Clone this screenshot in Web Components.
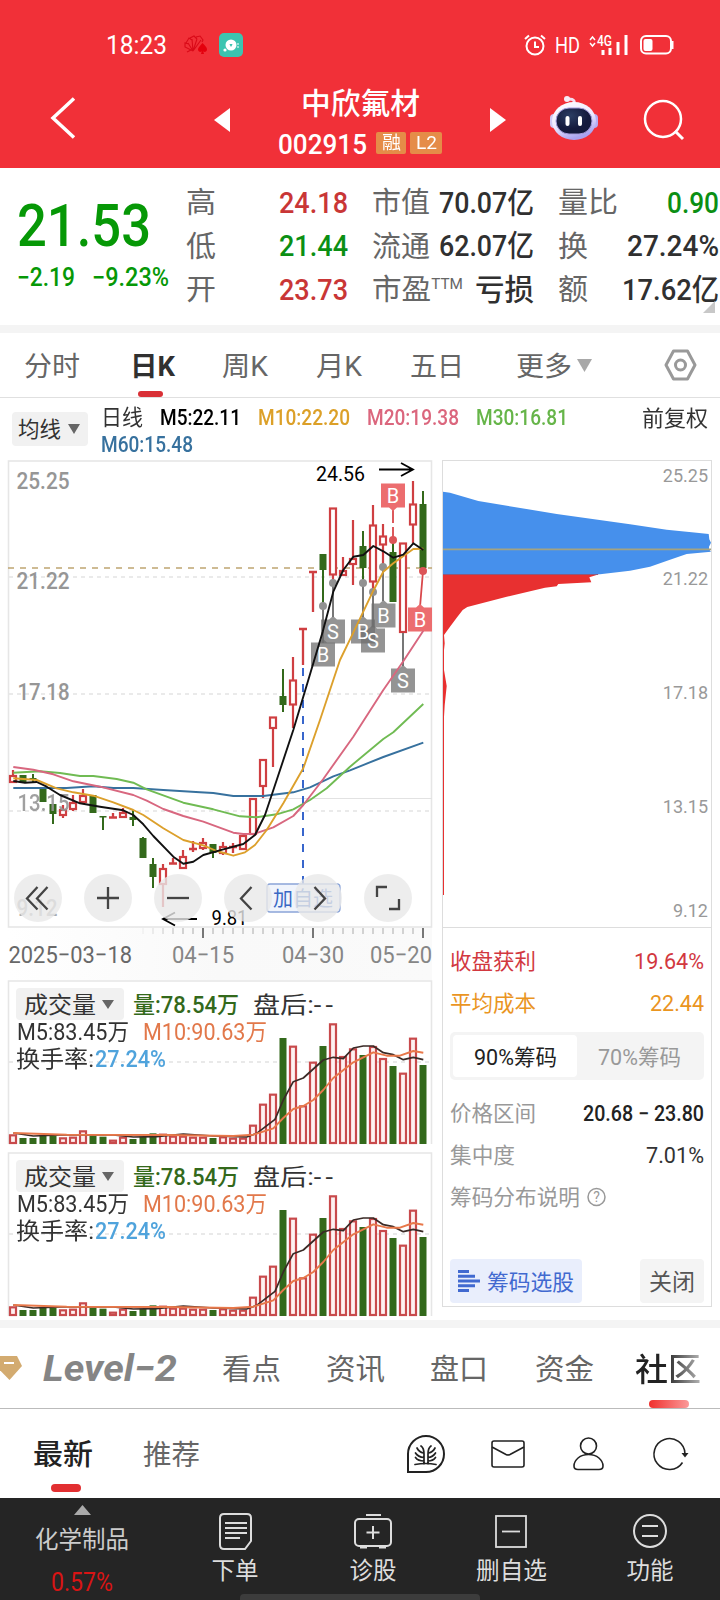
<!DOCTYPE html>
<html lang="zh-CN">
<head>
<meta charset="utf-8">
<meta name="viewport" content="width=720">
<title>中欣氟材 002915</title>
<style>
html,body{margin:0;background:#fff}
body{width:720px;height:1600px;overflow:hidden;font-family:Roboto,"Noto Sans CJK SC",sans-serif}
</style>
</head>
<body>
<stock-page></stock-page>
<script>
const sheet = `*{box-sizing:border-box} svg{display:block;flex:none;overflow:visible} .row{display:flex;align-items:center}`;
function define(name, html, setup) {
  const tpl = document.createElement('template');
  tpl.innerHTML = `<style>${sheet}</style>` + html;
  customElements.define(name, class extends HTMLElement {
    connectedCallback() {
      if (this.shadowRoot) return;
      const root = this.attachShadow({mode: 'open'});
      root.append(tpl.content.cloneNode(true));
      if (setup) setup.call(this, root);
    }
  });
}
/* A label whose run of text is condensed or widened to the width in "w"; --dy nudges its baseline. */
define('fit-text', `<style>:host{display:block;flex:none;white-space:nowrap;line-height:1.2}
span{display:inline-block;transform-origin:0 50%}</style><span><slot></slot></span>`, function (root) {
  const w = +this.getAttribute('w'), s = root.querySelector('span');
  const natural = s.getBoundingClientRect().width;
  this.style.width = w + 'px';
  if (natural) s.style.transform = `translateY(var(--dy, 0px)) scaleX(${w / natural})`;
});

/* ---------- header ---------- */
define('status-bar', `<style>:host{display:flex;align-items:center;height:90px;padding-left:106px;color:#fff;font-size:25px;--dy:1px}
.hd{font-size:22px}.r{flex:1}</style>
<fit-text w="61">18:23</fit-text>
<svg style="margin-left:17px" width="24" height="20" viewBox="0 0 24 20" fill="none" stroke="#d90a18" stroke-width="1.100"><path d="M9 16L1 12V8l4 1M2 8l3-5 3 2M6 3l4-2 3 3M12 2l4-1 3 4-1 2M9 16L4 8M9 16L8 4M9 16l4-12M9 16l8-11M3 17l4-2"/><path fill="#e4000d" stroke="none" d="M18.500 8c3 3 4.500 4.500 4.500 6.500 0 3-4 3-4 1l1 3.500h-3l1-3.500c0 2-4 2-4-1 0-2 2-3.500 4.500-6.500Z"/></svg>
<svg style="margin-left:11px" width="24" height="24"><rect width="24" height="24" rx="5" fill="#3cc4b0"/><circle cx="12" cy="12" r="5.500" fill="#fff"/><path d="M10.500 11h3l-1 2.500h-1Z" fill="#3cc4b0"/><circle cx="6" cy="17" r="1.600" fill="#fff"/><path d="M19 10v5" stroke="#fff" stroke-dasharray="2 1"/></svg>
<span class="r"></span>
<svg width="22" height="22" viewBox="0 0 22 22" fill="none" stroke="#fff" stroke-width="2"><circle cx="11" cy="12" r="8.500"/><path d="M11 7.500V13h4M1 5l4-3.500M21 5l-4-3.500"/></svg>
<fit-text class="hd" w="25" style="margin-left:9px">HD</fit-text>
<svg style="margin-left:9px" width="40" height="22" viewBox="0 0 40 22"><path d="M1 6l2.500-3L6 6M1 9l2.500 3L6 9" fill="none" stroke="#fff" stroke-width="1.500"/><text x="8" y="12" fill="#fff" font-size="15" font-family="Roboto" font-weight="500" textLength="15" lengthAdjust="spacingAndGlyphs">4G</text><path d="M14 16v5M21 14v7M29 8v13M37 1v20" stroke="#fff" stroke-width="3"/></svg>
<svg style="margin:0 46px 0 11px" width="34" height="20"><rect x="1" y="1" width="30" height="17.500" rx="5" fill="none" stroke="#fff" stroke-width="2"/><path d="M32.500 6v8" stroke="#fff" stroke-width="2"/><rect x="3.500" y="4" width="9" height="12" rx="2" fill="#fff"/></svg>`);

define('stock-nav', `<style>:host{display:flex;height:78px;color:#fff;align-items:flex-start}
.mid{display:flex;flex-direction:column;align-items:center;width:260px}
.t{font-size:30px;font-weight:500;line-height:34px;margin-top:-5px;--dy:1.500px}.row{font-size:28px;font-weight:500;height:26px;margin-top:11px;width:164px;--dy:1.500px}
.tag{font-size:18px;font-weight:400;background:#e58c48;border-radius:2px;height:22px;line-height:22px;display:flex;justify-content:center;margin-left:4px;--dy:0px}
.tag fit-text{line-height:22px}</style>
<svg style="margin:7px 0 0 50px" width="27" height="42"><path d="M24 1.500L3 21l21 19.500" fill="none" stroke="#fff" stroke-width="3.500"/></svg>
<svg style="margin:18px 0 0 137px" width="16" height="24"><path d="M16 0v24L0 12Z" fill="#fff"/></svg>
<div class="mid"><fit-text class="t" w="119">中欣氟材</fit-text>
<div class="row"><fit-text w="89">002915</fit-text><span class="tag" style="width:30px;margin-left:9px"><fit-text w="19">融</fit-text></span><span class="tag" style="width:32px"><fit-text w="21">L2</fit-text></span></div></div>
<svg style="margin:18px 0 0 0" width="16" height="24"><path d="M0 0v24l16-12Z" fill="#fff"/></svg>
<svg style="margin:5px 0 0 44px" width="48" height="46" viewBox="0 0 48 46"><defs><linearGradient id="g" x1="0" y1="0" x2=".4" y2="1"><stop offset="0" stop-color="#fff"/><stop offset=".6" stop-color="#ece9ff"/><stop offset="1" stop-color="#a9a2f0"/></linearGradient><radialGradient id="d" cx=".4" cy=".3"><stop offset="0" stop-color="#2b3d63"/><stop offset="1" stop-color="#141a3d"/></radialGradient></defs>
<path d="M23 9c2-2 2-5-5-5" fill="none" stroke="#f3dff0" stroke-width="3"/><circle cx="17" cy="4" r="3" fill="#f7ecf6"/><rect x="0" y="19" width="8" height="14" rx="4" fill="#cfc8f6"/><rect x="40" y="19" width="8" height="14" rx="4" fill="#b5adf3"/><ellipse cx="24" cy="26" rx="22" ry="19" fill="url(#g)"/><rect x="6" y="13" width="36" height="26" rx="13" fill="url(#d)" stroke="#a49ddb"/><rect x="15.500" y="21" width="4" height="10" rx="2" fill="#fff"/><rect x="28" y="21" width="4" height="10" rx="2" fill="#fff"/></svg>
<svg style="margin:10px 0 0 46px" width="42" height="42"><circle cx="19" cy="19" r="18" fill="none" stroke="#fff" stroke-width="2.500"/><path d="M31 31l8 8" stroke="#fff" stroke-width="3"/></svg>`);

/* ---------- quote ---------- */
define('quote-board', `<style>:host{display:flex;height:165px;border-bottom:8px solid #f4f4f4;color:#303030;overflow:hidden;position:relative;--dy:1.500px}
.price{width:186px;padding:18px 0 0 17px;color:#069806}.big{font-size:60px;font-weight:500;line-height:76px}.ch{font-size:25px;line-height:30px;margin-top:-1px;font-weight:500}
.g{display:grid;grid-template-rows:43px 44px 43px;align-items:center;font-size:29px;padding-top:12px;height:142px}
.l{color:#666;font-size:29px}.v{font-weight:500;font-size:29.500px}.r{color:#c93636}.gr{color:#0b8f14}
.g>*{justify-self:start}.g>.v{justify-self:end}sup{font-size:15px;vertical-align:11px;line-height:0}
.c{position:absolute;right:5px;top:133px}</style>
<div class="price"><fit-text class="big" w="134">21.53</fit-text><div class="row ch"><fit-text w="58">−2.19</fit-text><fit-text w="77" style="margin-left:17px">−9.23%</fit-text></div></div>
<div class="g" style="width:162px;grid-template-columns:40px 122px"><fit-text class="l" w="30">高</fit-text><fit-text class="v r" w="69">24.18</fit-text><fit-text class="l" w="30">低</fit-text><fit-text class="v gr" w="69">21.44</fit-text><fit-text class="l" w="30">开</fit-text><fit-text class="v r" w="69">23.73</fit-text></div>
<div class="g" style="width:162px;margin-left:24px;grid-template-columns:58px 104px"><fit-text class="l" w="58">市值</fit-text><fit-text class="v" w="95">70.07亿</fit-text><fit-text class="l" w="58">流通</fit-text><fit-text class="v" w="95">62.07亿</fit-text><fit-text class="l" w="91">市盈<sup>TTM</sup></fit-text><fit-text class="v" w="59">亏损</fit-text></div>
<div class="g" style="width:161px;margin-left:24px;grid-template-columns:auto 1fr"><fit-text class="l" w="60">量比</fit-text><fit-text class="v gr" w="52">0.90</fit-text><fit-text class="l" w="30">换</fit-text><fit-text class="v" w="92">27.24%</fit-text><fit-text class="l" w="30">额</fit-text><fit-text class="v" w="97">17.62亿</fit-text></div>
<svg class="c" width="12" height="12"><path d="M12 0v12H0Z" fill="#c8c8c8"/></svg>`);

define('period-tabs', `<style>:host{display:flex;align-items:center;height:65px;border-bottom:1px solid #e0e0e0;padding-left:24px;font-size:27px;color:#666;--dy:1.500px}
.on{color:#303030;font-weight:700;position:relative}.on i{position:absolute;left:8px;bottom:-16px;width:25px;height:6px;border-radius:3px;background:#d93036}</style>
<fit-text w="56">分时</fit-text><div class="on" style="margin-left:50px"><fit-text w="45">日K</fit-text><i></i></div><fit-text w="46" style="margin-left:47px">周K</fit-text><fit-text w="46" style="margin-left:48px">月K</fit-text><fit-text w="54" style="margin-left:48px">五日</fit-text><fit-text w="56" style="margin-left:52px">更多</fit-text>
<svg style="margin-left:5px" width="15" height="13"><path d="M0 0h15L7.500 13Z" fill="#a8a8a8"/></svg>
<svg style="margin-left:72px" width="33" height="32" fill="none" stroke="#999" stroke-width="3"><path d="M9.500 2h14L31 16l-7.500 14h-14L2 16Z" stroke-linejoin="round"/><circle cx="16.500" cy="16" r="5"/></svg>`);

define('ma-legend', `<style>:host{display:flex;height:62px;align-items:flex-start;font-size:22px;padding-left:12px;color:#333}
.b{display:flex;align-items:center;width:76px;height:34px;margin-top:14px;border-radius:4px;background:#f1f1f1;padding-left:6px;--dy:1px}
.ls{display:flex;flex-wrap:wrap;width:500px;margin:7px 0 0 13px;align-content:flex-start;line-height:26px;font-weight:500}.ls fit-text{margin-right:17px;line-height:26.500px;font-size:21.500px}</style>
<div class="b"><fit-text w="43">均线</fit-text><svg style="margin-left:7px" width="12" height="10"><path d="M0 0h12L6 10Z" fill="#666"/></svg></div>
<div class="ls"><fit-text w="42" style="font-weight:400">日线</fit-text><fit-text w="81" style="color:#000">M5:22.11</fit-text><fit-text w="92" style="color:#dca028">M10:22.20</fit-text><fit-text w="92" style="color:#db667d">M20:19.38</fit-text><fit-text w="92" style="color:#66b549">M30:16.81</fit-text><fit-text w="92" style="color:#37719e">M60:15.48</fit-text></div>
<fit-text w="66" style="margin:8px 0 0 41px">前复权</fit-text>`);

/* ---------- charts ---------- */
const X = i => 13 + 10 * i;
const line = (pts, color, w = 1.9) => `<polyline fill="none" stroke="${color}" stroke-width="${w}" stroke-linejoin="round" points="${pts}"/>`;
const scaled = (a, oy) => { const o = []; for (let i = 0; i < a.length; i += 2) o.push((a[i] / 3).toFixed(1) + ',' + (oy + a[i + 1] / 3).toFixed(1)); return o.join(' '); };
const fitted = (x, y, w, size, color, t, extra = '') => `<text x="${x}" y="${y}" font-size="${size}" fill="${color}" textLength="${w}" lengthAdjust="spacingAndGlyphs" ${extra}>${t}</text>`;
/* [up?, body top, body bottom, wick top, wick bottom] */
const candles = [[1,776,782,770,782],[0,775,782,775,782],[0,778,780,774,783],[0,788,802,788,802],[0,804,814,804,824],[1,810,815,805,818],[1,803,809,795,811],[1,796,802,789,803],[0,795,813,795,813],[0,816,817.5,816,830],[1,817,818,813,818],[1,813,817,808,818],[0,817,820,810,826],[0,838,858,837,858],[0,864,877,858,888],[1,869,884,864,907],[1,863,864,858,864],[1,857,868,850,869],[1,848,850,841,852],[1,843,848,838,850],[0,844,853,844,858],[1,847,853,842,855],[1,846.5,847.5,843,853],[1,836,849,835,850],[1,799,834,798,835],[1,760,786,760,798],[1,717.500,728,717,767],[0,696,705,669,712],[1,680.500,704.500,657,728],[1,628.500,629.500,629,665],[1,571.500,572.500,572,612],[0,554,570,554,606],[1,508.500,574.500,508,583],[1,571,575,557,576],[1,559,564,520,585],[0,546,568,531,583],[1,525.500,581.500,505,592],[1,536.500,544.500,524,567],[0,552,602,540,602],[1,543.500,632,543,633],[1,504.500,524.500,481,543],[0,504,568,491,571]];
function candle([up, a, b, t, u], i) {
  const x = X(i);
  if (!up) return `<path d="M${x} ${t}V${u}" stroke="#33691b" stroke-width="2"/><rect x="${x - 3.500}" y="${a}" width="7" height="${b - a}" fill="#33691b"/>`;
  if (b - a < 2.1) return `<path d="M${x} ${t}V${u}M${x - 4} ${(a + b) / 2}h8" stroke="#cf3f42" stroke-width="2.300"/>`;
  return `<path d="M${x} ${t}V${a}M${x} ${b}V${u}" stroke="#cf3f42" stroke-width="2.200"/><rect x="${x - 3}" y="${a}" width="6" height="${b - a}" fill="#fff" stroke="#cf3f42" stroke-width="2.200"/>`;
}
/* [letter, box centre x, box centre y, hot?] */
const marks = [['B',323,654.5],['S',333,631.500],['B',363,631.500],['S',373,640.500],['B',383.500,615.500],['S',403,680.500],['B',393,495.500,1],['B',420,619.500,1]];
const stems = `<g stroke="#777" stroke-width="2"><path d="M323 606V643M333 583V617M363 583V617M373 592V627M383 567V601M403 633V666"/></g><g fill="#929292"><circle cx="323" cy="606" r="4"/><circle cx="333" cy="583" r="4"/><circle cx="363" cy="583" r="4"/><circle cx="373" cy="592" r="4"/><circle cx="383" cy="567" r="4"/></g><path d="M393 510v13m0 4v13M423 571l-3 36" stroke="#d9484b" stroke-width="1.800" fill="none"/><g fill="#dc5558"><circle cx="393" cy="540" r="4"/><circle cx="423" cy="571" r="4"/></g>`;
const mark = ([c, x, y, hot]) => { const top = hot && y < 500, e = top ? y + 12 : y - 12, k = top ? 3.5 : -3.5;
  return `<path d="M${x - 12} ${y - 12}${top ? 'h24v24h-8l-4 3.500-4-3.500h-8Z' : 'h8l4-3.500 4 3.500h8v24h-24Z'}" stroke-linejoin="round" fill="${hot ? '#ec6d6f' : '#6f6f6f'}" fill-opacity="${hot ? 1 : .74}"/>`; };
const letter = ([c, x, y]) => `<text x="${x}" y="${y + 7}" text-anchor="middle" font-size="20" fill="#fff">${c}</text>`;

define('chart-button', `<style>:host{display:block;width:48px;height:48px;border-radius:50%;background:rgba(232,232,232,.8)}</style><svg width="48" height="48" fill="none" stroke="#444" stroke-width="2.300"><path/></svg>`, function (root) {
  root.querySelector('path').setAttribute('d', {
    first: 'M23.500 13L13 24.500l10.500 11M33.500 13L23 24.500l10.500 11', plus: 'M13 24h22M24 13v22', minus: 'M13 24h22', prev: 'M27.500 13L17 24.500l10.500 11', next: 'M20.500 13L31 24.500l-10.500 11', full: 'M13 23V13h10M25 35h10V25'
  }[this.getAttribute('icon')]);
});

define('k-chart', `<style>:host{display:grid;width:440px;height:520px}:host>*{grid-area:1/1}
.tools{display:flex;gap:22px;padding:414px 0 0 14px;height:470px;z-index:1}</style><div class="chart"></div>
<div class="tools"><chart-button icon="first"></chart-button><chart-button icon="plus"></chart-button><chart-button icon="minus"></chart-button><chart-button icon="prev"></chart-button><chart-button icon="next"></chart-button><chart-button icon="full"></chart-button></div>`, function (root) {
  const m5 = [40,993,75,998,110,996,140,1010,180,1035,240,1060,300,1070,370,1081,400,1095,430,1123,460,1158,520,1220,550,1241,580,1235,610,1215,670,1198,730,1182,765,1155,795,1095,830,990,880,840,925,690,968,545,1000,425,1030,360,1060,320,1090,315,1120,288,1150,304,1180,323,1210,314,1240,280,1270,300];
  const m10 = [40,985,110,990,170,1015,220,1027,280,1037,340,1057,400,1080,430,1095,490,1135,550,1170,610,1186,650,1203,700,1217,735,1207,765,1185,800,1140,850,1060,910,955,960,810,1000,690,1020,630,1060,548,1120,422,1150,365,1180,340,1240,297,1270,296];
  const m20 = [40,951,100,959,160,973,220,994,300,1010,400,1035,440,1052,490,1077,550,1098,610,1115,700,1148,730,1152,765,1151,820,1132,880,1098,910,1065,970,987,1060,860,1150,720,1210,634,1270,542];
  const m30 = [40,968,120,964,180,969,240,978,280,978,350,987,400,998,440,1018,550,1058,640,1078,720,1099,770,1102,830,1093,880,1078,930,1050,980,1015,1050,950,1150,867,1180,847,1270,762];
  const m60 = [40,1014,200,1014,280,1009,340,1014,400,1014,490,1020,600,1027,640,1029,700,1038,790,1038,880,1027,930,1012,1000,979,1050,961,1150,921,1270,878];
  let ticks = '';
  for (let i = 13; i < 42; i++) { const big = i === 19 || i === 30 || i === 41; ticks += `<path d="M${X(i)} 928v${big ? 10 : 6}" stroke="${big ? '#777' : '#aaa'}" stroke-width="${big ? 2 : 1}" opacity="${Math.min(1, (i - 12) / 5)}"/>`; }
  const ax = 'font-weight="500"';
  root.querySelector('.chart').innerHTML = `<svg width="440" height="520" viewBox="0 460 440 520" font-family='Roboto,"Noto Sans CJK SC",sans-serif'>
  <defs><linearGradient id="f"><stop offset="0" stop-color="#fff"/><stop offset=".5" stop-color="#f9f9f9"/><stop offset="1" stop-color="#fafafa"/></linearGradient></defs>
  <rect x="8" y="927" width="424" height="53" fill="url(#f)"/>
  <rect x="8.500" y="461" width="423" height="466" fill="#fff" stroke="#e6e6e6" stroke-width="1.600"/>
  <path d="M9 577H431M9 694H431M9 811H431" stroke="#e4e4e4" stroke-width="1.500" stroke-dasharray="4 4"/><path d="M260 798.500H432" stroke="#e2e2e2"/>
  <path d="M8 568H432" stroke="#bfa572" stroke-width="1.600" stroke-dasharray="6 6"/>
  ${candles.map(candle).join('')}
  ${fitted(16.500,489,53,23,'#969696','25.25',ax)}${fitted(16.500,589,53,23,'#969696','21.22',ax)}${fitted(17.500,700,52,23,'#969696','17.18',ax)}${fitted(17.500,811,52,23,'#969696','13.15',ax + ' opacity=".9"')}${fitted(16.500,916,41,23,'#aaa','9.12',ax)}
  <path d="M303 668V884" stroke="#3866cc" stroke-width="2" stroke-dasharray="8 8"/>
  ${stems}${marks.map(mark).join('')}${marks.map(letter).join('')}
  ${line(scaled(m60,450),'#37719e')}${line(scaled(m30,450),'#70bb53')}${line(scaled(m20,450),'#d8677f')}${line(scaled(m10,450),'#dca02c')}${line(scaled(m5,450),'#111')}
  ${fitted(316,481,49,20,'#000','24.56')}<path d="M379 469.500h33M401 463l12 6.500-12 6.500" fill="none" stroke="#000" stroke-width="1.800"/>
  ${fitted(211.500,925,36,20,'#000','9.81')}<path d="M197 919h-33M175 912.500l-12 6.500 12 6.500" fill="none" stroke="#000" stroke-width="1.800"/>
  <rect x="267" y="884" width="73" height="28" rx="3" fill="#f0f4fc" stroke="#8aa4d8" stroke-width="1.300"/>${fitted(273,906,60,20,'#3a68c4','加自选')}
  ${ticks}
  ${fitted(8.500,963,123.500,24,'#686868','2025−03−18')}${fitted(172,963,62,24,'#868686','04−15')}${fitted(282,963,62,24,'#868686','04−30')}${fitted(370,963,62,24,'#868686','05−20')}
  </svg>`;
});

const vols = '493r504g504g497g497g502r500r481r498g500g509r500r507g500g490g491r497r497r500r500r504g499r503r503r464r401r371r204g227r406r275r228g160r258r235r255g228r264r288g308r203r285g'.match(/\d+./g);
define('volume-chart', `<style>:host{display:grid;width:440px;height:172px}:host>*{grid-area:1/1}
.t{padding:8px 0 0 16px;z-index:1;font-size:23px;color:#333}.row{height:27px}.b{background:#f1f1f1;border-radius:4px;width:108px;height:32px;padding-left:8px}.d{letter-spacing:3.500px}</style><div class="c"></div>
<div class="t"><div class="row" style="height:32px;--dy:1.500px"><div class="row b"><fit-text w="72">成交量</fit-text><svg style="margin-left:6px" width="12" height="9"><path d="M0 0h12L6 9Z" fill="#666"/></svg></div><fit-text w="106" style="margin-left:9px;color:#33691b;font-weight:500">量:78.54万</fit-text><fit-text w="84" style="margin-left:14px">盘后:<span class="d">--</span></fit-text></div>
<div class="row" style="height:25px"><fit-text w="112" style="margin-left:1px">M5:83.45万</fit-text><fit-text w="124" style="margin-left:14px;color:#e2784a">M10:90.63万</fit-text></div>
<div class="row" style="height:29px"><fit-text w="78">换手率:</fit-text><fit-text w="71" style="margin-left:1px;color:#4fa3dc;font-weight:500">27.24%</fit-text></div></div>`, function (root) {
  const a = [40,489,100,498,180,495,340,495,400,501,470,500,550,492,640,498,740,501,770,490,825,448,850,390,880,335,910,324,970,270,1000,262,1030,266,1060,234,1090,228,1120,228,1150,248,1180,254,1210,269,1240,262,1270,269];
  const b = [40,489,200,494,500,495,700,498,760,494,820,475,850,444,880,417,910,408,940,390,970,360,1000,324,1060,277,1120,247,1160,257,1200,257,1240,243,1270,248];
  const bars = vols.map((v, i) => { const y = 970 + parseInt(v) / 3, x = X(i); return v.endsWith('g') ? `<rect x="${x - 3.500}" y="${y}" width="7" height="${1144 - y}" fill="#33691b"/>` : `<rect x="${x - 3}" y="${y + 1}" width="6" height="${1142 - y}" fill="#fdf1f1" stroke="#c84a4c" stroke-width="2.200"/>`; }).join('');
  root.querySelector('.c').innerHTML = `<svg width="440" height="172" viewBox="0 980 440 172"><path d="M8.500 1144V981H431.500V1144" fill="none" stroke="#e6e6e6" stroke-width="1.600"/><path d="M9 1062H431" stroke="#e2e2e2" stroke-width="1.500" stroke-dasharray="4 4"/>${bars}${line(scaled(a,970),'#3a2a26',1.700)}${line(scaled(b,970),'#e8784a',1.900)}</svg>`;
});

define('chip-panel', `<style>:host{display:flex;flex-direction:column;width:270px;height:847px;margin-left:2px;border:1px solid #ddd;color:#999;font-size:21.500px;--dy:1px}
.info{border-top:1px solid #ddd;flex:1;padding:12px 7px 0 7px;display:flex;flex-direction:column}.row{justify-content:space-between;height:42px}
.seg{display:flex;height:48px;margin-top:8px;background:#f4f4f4;border-radius:5px;padding:3px;--dy:2px}.seg div{flex:1;display:flex;align-items:center;justify-content:center}.seg .on{background:#fff;border-radius:4px;color:#222}
.bt{display:flex;justify-content:space-between;margin-top:41px;--dy:1.500px}.bt div{height:44px;border-radius:4px;display:flex;align-items:center;justify-content:center}</style>
<svg class="p" width="268" height="466" viewBox="443 461 268 466" font-family="Roboto" font-size="18" fill="#999"></svg>
<div class="info"><div class="row" style="color:#d2383f"><fit-text w="86">收盘获利</fit-text><fit-text w="70">19.64%</fit-text></div><div class="row" style="color:#ea951f"><fit-text w="86">平均成本</fit-text><fit-text w="54">22.44</fit-text></div>
<div class="seg"><div class="on"><fit-text w="83">90%筹码</fit-text></div><div><fit-text w="83">70%筹码</fit-text></div></div>
<div class="row" style="margin-top:12px"><fit-text w="86">价格区间</fit-text><fit-text w="121" style="color:#222;font-weight:500">20.68 − 23.80</fit-text></div><div class="row"><fit-text w="65">集中度</fit-text><fit-text w="58" style="color:#333">7.01%</fit-text></div>
<div class="row" style="justify-content:flex-start"><fit-text w="130">筹码分布说明</fit-text><svg style="margin-left:7px" width="19" height="19"><circle cx="9.500" cy="9" r="8.500" fill="none" stroke="#999" stroke-width="1.500"/><text x="9.500" y="14" text-anchor="middle" font-size="14" fill="#999" font-family="Roboto">?</text></svg></div>
<div class="bt"><div style="width:132px;background:#e9eefc;color:#4169d0"><svg style="margin-right:7px" width="22" height="22" stroke="#4169d0" stroke-width="2.800"><path d="M0 1.500h11M0 6.250h17M0 11h22M0 15.750h17M0 20.500h11"/></svg><fit-text w="87">筹码选股</fit-text></div><div style="width:64px;background:#f4f4f4;color:#555;font-size:23px"><fit-text w="46">关闭</fit-text></div></div></div>`, function (root) {
  const s = a => { const o = []; for (let i = 0; i < a.length; i += 2) o.push((430 + a[i] / 3).toFixed(1) + ',' + (450 + a[i + 1] / 3).toFixed(1)); return o.join(' '); };
  root.querySelector('.p').innerHTML = `<polygon fill="#4690ec" points="${s([39,125,60,128,145,153,380,192,600,223,710,239,800,248,836,252,838,268,843,278,837,290,837,298,843,305,770,312,720,329,660,350,600,362,510,373,39,373])}"/><polygon fill="#e83030" points="${s([39,373,507,373,478,382,484,397,385,402,380,409,345,413,230,440,112,471,98,480,80,503,60,530,42,555,44,580,42,600,42,660,50,708,44,765,42,800,42,1335,39,1335])}"/><path d="M443 549.300H711" stroke="#a3a382" stroke-width="1.700"/><path d="M443 574.500H598" stroke="#8a5a80"/>` + [[482,'25.25'],[585,'21.22'],[699,'17.18'],[813,'13.15'],[917,'9.12']].map(([y, t]) => `<text x="708" y="${y}" text-anchor="end">${t}</text>`).join('');
});

/* ---------- lower bars ---------- */
define('section-tabs', `<style>:host{display:flex;align-items:center;height:89px;border-top:8px solid #f4f4f4;border-bottom:1px solid #bbb;font-size:29px;color:#666;--dy:2px}
.lv{font:italic 700 37px Roboto,sans-serif;line-height:40px;color:#858585;--dy:1px}.on{position:relative;font-size:32px;font-weight:500;margin-left:41px}
.on fit-text{-webkit-mask:linear-gradient(90deg,#000 45%,#0005);mask:linear-gradient(90deg,#000 45%,#0005);color:#222;padding-bottom:3px;margin-bottom:-3px}.on i{position:absolute;left:14px;bottom:-21px;width:40px;height:8px;border-radius:4px;background:linear-gradient(90deg,#f0302d,#fb9a9a)}</style>
<svg width="22" height="24"><path d="M-8 0H17l5 10L9.500 24-6 8Z" fill="#d3ab70"/><path d="M4 7h10" stroke="#fff" stroke-width="2"/></svg>
<fit-text class="lv" w="134" style="margin-left:21px">Level−2</fit-text><fit-text w="59" style="margin-left:45px">看点</fit-text><fit-text w="59" style="margin-left:45px">资讯</fit-text><fit-text w="58" style="margin-left:45px">盘口</fit-text><fit-text w="59" style="margin-left:47px">资金</fit-text><div class="on"><fit-text w="66">社区</fit-text><i></i></div>`);

define('feed-bar', `<style>:host{display:flex;align-items:center;height:89px;font-size:28px;color:#666;--dy:2px}.on{position:relative;color:#222;font-size:29px;font-weight:500;margin-left:33px}.on i{position:absolute;left:18px;bottom:-21px;width:30px;height:8px;border-radius:4px;background:#e22f31}</style>
<div class="on"><fit-text w="60">最新</fit-text><i></i></div><fit-text w="57" style="margin-left:50px">推荐</fit-text>
<svg style="margin-left:207px" width="38" height="38" fill="none" stroke="#222" stroke-width="2"><path d="M1 37V19A18 18 0 1 1 19 37Z"/><path stroke-width="1.700" stroke-linecap="round" d="M17 29V19Q17 13 14 11M21 29V19Q21 13 24 11M8 29.500Q19 27.500 29 29.500M16.500 18Q12 17 10 13M17 22.500Q11 22 8.500 18M17 26Q11 26 8.500 22.500M21.500 18Q26 17 28 13M21 22.500Q26 22 28.500 18M21 26Q26 26 28.500 22.500"/></svg>
<svg style="margin-left:46px" width="34" height="28" fill="none" stroke="#222" stroke-width="1.600"><rect x="1" y="1" width="32" height="26" rx="2"/><path d="M1 7l14 7.500q2 1 4 0L33 7"/></svg>
<svg style="margin-left:48px" width="31" height="34" fill="none" stroke="#222" stroke-width="1.600"><circle cx="15.500" cy="9" r="8"/><path d="M15.500 17.500C7 17.500 1 23 1 29q0 3.500 4 3.500h21q4 0 4-3.500c0-6-6-11.500-14.500-11.500Z"/></svg>
<svg style="margin-left:49px" width="36" height="34" fill="none" stroke="#222" stroke-width="1.600"><path d="M29.500 25.500A15.500 15.500 0 1 1 32 17"/><path d="M28.500 16h7L32 20.500Z" fill="#222" stroke="none"/></svg>`);

define('nav-item', `<style>:host{display:flex;flex-direction:column;align-items:center;color:#ddd;font-size:23.500px;width:80px}.i{display:flex;align-items:center;height:38px;margin-top:14px}</style><div class="i"><slot name="icon"></slot></div><slot></slot>`);
define('bottom-bar', `<style>:host{display:flex;position:relative;height:102px;background:#252525;color:#ccc;overflow:hidden;--dy:1px}
.s{display:flex;flex-direction:column;align-items:center;width:128px;padding:7px 0 0;margin-left:18px;font-size:23.500px;--dy:1.500px}.home{position:absolute;left:240px;bottom:0;width:240px;height:6px;border-radius:4px 4px 0 0;background:#3c3c3c}nav-item fit-text{margin-top:6px}</style>
<div class="s"><svg width="17" height="10"><path d="M0 10h17L8.500 0Z" fill="#aaa"/></svg><fit-text w="94" style="margin-top:9px">化学制品</fit-text><fit-text w="62" style="margin-top:14px;color:#d81414;font-size:25px">0.57%</fit-text></div>
<nav-item style="margin-left:49px"><svg slot="icon" width="33" height="37" fill="none" stroke="#ddd" stroke-width="2"><path d="M5 1h23q4 0 4 4v23l-6 8H5q-4 0-4-4V5q0-4 4-4Z"/><path d="M6 10h22M6 15h22M6 20h22M6 25h15"/></svg><fit-text w="47">下单</fit-text></nav-item>
<nav-item style="margin-left:58px"><svg slot="icon" width="38" height="36" fill="none" stroke="#ddd" stroke-width="2"><rect x="1" y="6" width="36" height="27" rx="4"/><path d="M12 2h15M19 13v13M12.500 19.500h13M6 34.500h7M25 34.500h7"/></svg><fit-text w="47">诊股</fit-text></nav-item>
<nav-item style="margin-left:58px"><svg slot="icon" width="32" height="33" fill="none" stroke="#ddd" stroke-width="1.800"><rect x="1" y="1" width="30" height="31"/><path d="M7 16.500h18"/></svg><fit-text w="71">删自选</fit-text></nav-item>
<nav-item style="margin-left:59px"><svg slot="icon" width="34" height="34" fill="none" stroke="#ddd" stroke-width="2"><circle cx="17" cy="17" r="16"/><path d="M9 12h16M9 22h16"/></svg><fit-text w="47">功能</fit-text></nav-item><span class="home"></span>`);

define('stock-page', `<style>:host{display:flex;flex-direction:column;width:720px;height:1600px;background:#fff}header{background:#f13038}.main{display:flex;height:860px}.left{width:440px}</style>
<header><status-bar></status-bar><stock-nav></stock-nav></header><quote-board></quote-board><period-tabs></period-tabs><ma-legend></ma-legend>
<div class="main"><div class="left"><k-chart></k-chart><volume-chart></volume-chart><volume-chart></volume-chart></div><chip-panel></chip-panel></div>
<section-tabs></section-tabs><feed-bar></feed-bar><bottom-bar></bottom-bar>`);
</script>
</body>
</html>
